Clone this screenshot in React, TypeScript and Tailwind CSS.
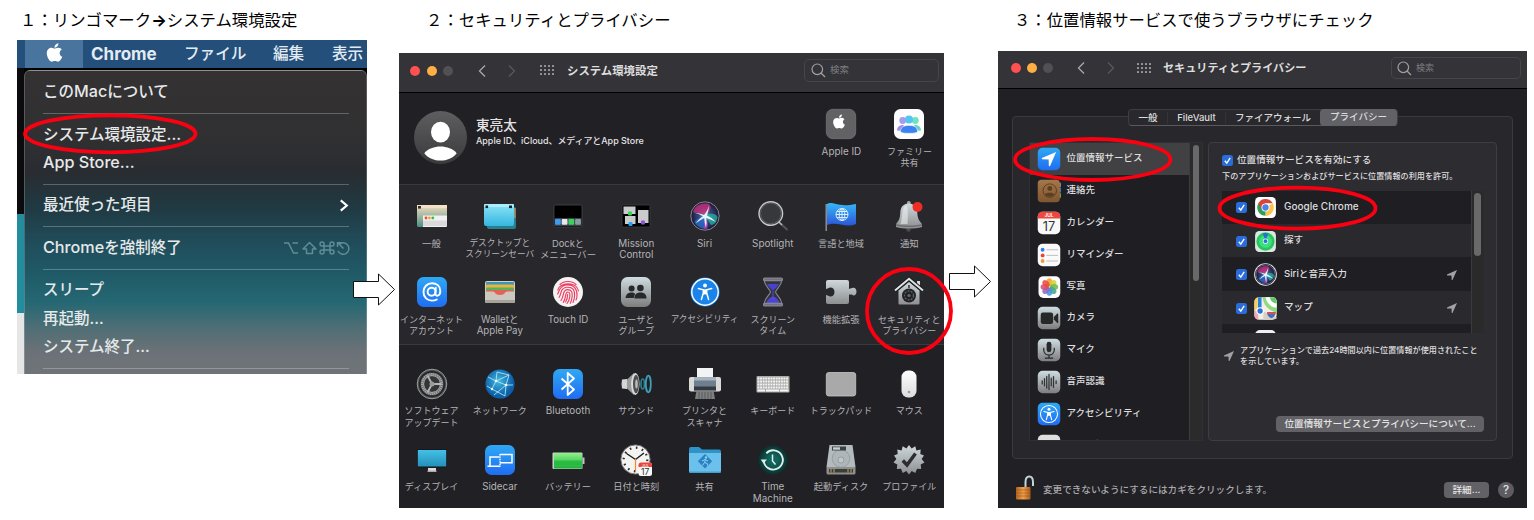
import React from "react";
import { FaApple } from "react-icons/fa";

const FONT = "font-['Inter','Noto_Sans_CJK_JP',sans-serif]";

function Defs() {
  const g = (id: string, a: string, b: string) => (
    <linearGradient id={id} x1="0" y1="0" x2="0" y2="1">
      <stop offset="0" stopColor={a} />
      <stop offset="1" stopColor={b} />
    </linearGradient>
  );
  return (
    <svg className="absolute h-0 w-0" aria-hidden="true">
      <defs>
        {g("blue", "#2fa8f5", "#1f6df2")}
        {g("grey", "#cfdde2", "#7d7d7d")}
        {g("silver", "#cfd8dc", "#8d8f90")}
        {g("white", "#ffffff", "#dcdcdc")}
        {g("desk", "#8be4f7", "#35b6e0")}
        {g("general", "#f6dfc0", "#4a8f85")}
        {g("flag", "#35b8f8", "#2c55d8")}
        {g("green", "#8df28d", "#1fae35")}
        {g("screen", "#45bfe6", "#2390bb")}
        {g("bronze", "#a5774a", "#7e5630")}
        {g("userdark", "#5e5e60", "#3a3a3c")}
        <radialGradient id="tm">
          <stop offset="0.3" stopColor="#12655c" />
          <stop offset="1" stopColor="#0b302e" />
        </radialGradient>
        <radialGradient id="net" cx="0.45" cy="0.4">
          <stop offset="0" stopColor="#43b8dd" />
          <stop offset="1" stopColor="#0c5fa8" />
        </radialGradient>
        <radialGradient id="siriBg">
          <stop offset="0" stopColor="#7fb6d8" />
          <stop offset="0.4" stopColor="#35507e" />
          <stop offset="1" stopColor="#1d1638" />
        </radialGradient>
        <linearGradient id="wood">
          <stop offset="0" stopColor="#b5641f" />
          <stop offset="0.5" stopColor="#f0a14c" />
          <stop offset="1" stopColor="#a85a1c" />
        </linearGradient>
      </defs>
    </svg>
  );
}

const Siri = () => (
  <g>
    <circle cx="16" cy="16" r="14.2" fill="url(#siriBg)" stroke="#8f9399" strokeWidth="0.9" />
    <path d="M4 12C6 5 13 2.500 20 4C24 8 20 13 16 15.500C12 13.500 7 12.500 4 12Z" fill="#d1307f" opacity="0.75" />
    <path d="M16 15.500C20 13 27 13 28.500 17C28 22 25 25 22 25Z" fill="#27b5a4" opacity="0.75" />
    <path d="M16 16C11 17 6 20 5.500 22C8 27 13 29 16 28.500Z" fill="#2b6fd0" opacity="0.75" />
    <path d="M16 16C18 19 20 24 18 29L14.500 29Z" fill="#b13cc0" opacity="0.75" />
    <path d="M4.500 12.500Q11 13 15 15Q18 12 20 5.500Q19.500 12 18 15.500Q23 17.500 27 22Q22 19.500 17.300 18Q18 23 17 28Q15.500 23 15.200 18Q11 20 6.500 23.500Q10 18.500 14 16.300Q10 13.800 4.500 12.500Z" fill="#eafcff" opacity="0.95" />
  </g>
);

const AccessMan = ({ r = 11.4 }: { r?: number }) => (
  <g>
    <circle cx="16" cy="16" r={r} fill="none" stroke="#fff" strokeWidth="1.4" />
    <circle cx="16" cy="9.600" r="2" fill="#fff" />
    <path d="M9.300 12.600L14.300 13.800V17L12.400 23.500M22.700 12.600L17.700 13.800V17L19.600 23.500" fill="none" stroke="#fff" strokeWidth="1.500" strokeLinecap="round" />
    <path d="M14 13.300H18V18.400H14Z" fill="#fff" />
  </g>
);

const PEOPLE = (
  <g fill="#26282a">
    <circle cx="11.600" cy="12.500" r="3" />
    <circle cx="20.400" cy="12" r="3.300" />
    <path d="M5.500 22C6 17.500 9 16.600 11.600 16.600C13 16.600 14.500 17 15 18L13.600 22Z" />
    <path d="M14.300 22.500C14.600 18 17 16.600 20.400 16.600C24 16.600 26.200 18 26.600 22.500Z" />
  </g>
);

const tile = (fill: string) => <rect x="1" y="1" width="30" height="30" rx="6.500" fill={fill} />;

const ICONS: Record<string, React.ReactNode> = {
  appleid: (
    <g>
      <rect x="1.300" y="1.300" width="29.400" height="29.400" rx="6.500" fill="#626264" stroke="#78787a" strokeWidth="0.700" />
      <FaApple x="6" y="5.500" width="20" height="20" color="#fff" />
    </g>
  ),
  family: (
    <g>
      {tile("#fdfdfe")}
      <circle cx="9.700" cy="12.500" r="3.400" fill="#a99af0" />
      <circle cx="22.300" cy="12.500" r="3.400" fill="#6fe3bd" />
      <path d="M4 22.500C4 18.500 7 17 10.500 17L12 23Z" fill="#a08df0" />
      <path d="M28 22.500C28 18.500 25 17 21.500 17L20 23Z" fill="#62d8bc" />
      <circle cx="16" cy="11.500" r="4" fill="#54c6ee" />
      <path d="M7.500 24C7.500 19 11 17.400 16 17.400S24.500 19 24.500 24C23 25.800 9 25.800 7.500 24Z" fill="#3d82f2" stroke="#fff" strokeWidth="0.500" />
    </g>
  ),
  general: (
    <g>
      <rect x="1" y="5" width="30" height="22" rx="1.500" fill="url(#general)" />
      <rect x="1" y="5" width="30" height="3" fill="#f3e2c8" />
      <rect x="2" y="6" width="3" height="2.600" fill="#333" />
      <path d="M7 15.500H31V25.500Q31 27 29.500 27H7Z" fill="#f1f1f1" />
      <path d="M7 20.500H31V26H7Z" fill="#dadada" />
      <circle cx="10" cy="18" r="1.400" fill="#f0483e" />
      <circle cx="13.400" cy="18" r="1.400" fill="#f5a623" />
      <circle cx="16.800" cy="18" r="1.400" fill="#35c13f" />
    </g>
  ),
  desktop: (
    <g>
      <rect x="3" y="7" width="29" height="22" rx="2" fill="#2a7f8e" />
      <path d="M30 8H31.600V18H30Z" fill="#a98b62" />
      <rect x="0" y="4" width="30" height="22" rx="2" fill="url(#desk)" />
      <rect x="0" y="4" width="30" height="3" rx="1" fill="#a9eefa" />
      <rect x="1.500" y="5.500" width="2.600" height="2.600" fill="#123" />
      <rect x="25" y="5.500" width="3" height="2.600" fill="#123" />
    </g>
  ),
  dock: (
    <g>
      <rect x="2" y="5" width="28" height="22" rx="1.500" fill="#000" stroke="#48484b" strokeWidth="0.800" />
      <rect x="2.500" y="18" width="27" height="8" fill="#3b4148" />
      <rect x="3" y="19" width="5.800" height="5.800" rx="1" fill="#3c9df0" />
      <rect x="9.700" y="19" width="5.800" height="5.800" rx="1" fill="#e8e8ea" />
      <rect x="16.400" y="19" width="5.800" height="5.800" rx="1" fill="#38d35a" />
      <rect x="23.100" y="19" width="5.800" height="5.800" rx="1" fill="#8b9ba3" />
    </g>
  ),
  mission: (
    <g>
      <rect x="2" y="5" width="28" height="22" rx="1.500" fill="#000" stroke="#3e3e41" strokeWidth="0.800" />
      <path d="M3.500 6.500H15.500V14H3.500ZM5 16H15.500V24H5ZM18 10H28.500V23H18Z" fill="#c9cbcc" />
      <rect x="8" y="11.500" width="4" height="4" rx="1" fill="#34d44c" />
      <rect x="8.500" y="22" width="4" height="4" rx="1" fill="#2aa2ef" />
      <rect x="21" y="20.500" width="4" height="4" rx="1" fill="#9152d6" />
    </g>
  ),
  siri: <Siri />,
  spotlight: (
    <g>
      <path d="M23.500 23.500L30 29.500" stroke="#55565a" strokeWidth="2" strokeLinecap="round" />
      <path d="M22 22L25 25" stroke="#b6b6b8" strokeWidth="1.500" />
      <circle cx="13.800" cy="13.500" r="11.800" fill="#37383b" stroke="#c7c8ca" strokeWidth="1.400" />
      <circle cx="13.800" cy="13.500" r="10.300" fill="none" stroke="#66676a" strokeWidth="0.800" />
    </g>
  ),
  language: (
    <g>
      <path d="M1.200 4V31" stroke="#9a9da2" strokeWidth="1.300" />
      <path d="M2 4C8 0.500 12 8 31 4V24C20 28.500 12 21 2 25Z" fill="url(#flag)" />
      <g fill="none" stroke="#d9efff" strokeWidth="1">
        <circle cx="17" cy="14.500" r="6" />
        <ellipse cx="17" cy="14.500" rx="2.800" ry="6" />
        <path d="M11 14.500H23M12 11.500H22M12 17.500H22M17 8.500V20.500" />
      </g>
    </g>
  ),
  bell: (
    <g>
      <circle cx="15.500" cy="29.500" r="2.300" fill="#4b4b4d" />
      <rect x="14" y="1" width="3.600" height="5" rx="1.500" fill="#a7a7a7" />
      <path d="M15.800 3.500C9 4 7.500 8 7.300 13C7 19 5.500 21 3 24V27C10 29 22 29 29 27V24C26.500 21 24.600 19 24.300 13C24 8 22 4 15.800 3.500Z" fill="url(#silver)" />
      <path d="M12 6C9 8 9.500 18 7.500 24H14.500C15 18 15 10 14 5.500Z" fill="#f3f3f3" opacity="0.550" />
      <path d="M3 24C10 26 22 26 29 24V25.500C22 27.500 10 27.500 3 25.500Z" fill="#6d6d6e" />
      <circle cx="24.500" cy="7" r="5" fill="#f02c27" />
    </g>
  ),
  internet: (
    <g>
      {tile("url(#blue)")}
      <g fill="none" stroke="#fff" strokeWidth="1.900" strokeLinecap="round">
        <circle cx="15.600" cy="15.800" r="4" />
        <path d="M19.800 11.800L19.300 17.500C19.200 21 24.300 20.500 24.300 15C24.300 10 20.500 7.300 16 7.300C11 7.300 7.500 11 7.500 16C7.500 21.500 11.500 24.600 16 24.600C18 24.600 19.600 24.200 20.800 23.500" />
      </g>
    </g>
  ),
  wallet: (
    <g>
      <rect x="1" y="5" width="30" height="22" rx="2" fill="#d3cfc4" />
      <rect x="2" y="6" width="28" height="6" rx="1" fill="#3c95b9" />
      <rect x="2" y="8.500" width="28" height="6" rx="1" fill="#e9b53f" />
      <rect x="2" y="11.500" width="28" height="6" rx="1" fill="#56b35b" />
      <rect x="2" y="14" width="28" height="6" rx="1" fill="#e46158" />
      <path d="M1 15.500H9C11 15.500 11 19 16 19S21 15.500 23 15.500H31V25Q31 27 29 27H3Q1 27 1 25Z" fill="#cbc8bf" />
      <path d="M1 24H31V25Q31 27 29 27H3Q1 27 1 25Z" fill="#a7a399" />
    </g>
  ),
  touchid: (
    <g>
      <circle cx="16" cy="16" r="15" fill="#f4f2f3" />
      <g fill="none" stroke="#ee3d60" strokeWidth="1.150" strokeLinecap="round">
        <path d="M8 8.500C12 4.500 20 4.500 24 8.500M5.800 14C7 6.500 25 5 26.500 15M5.500 18C7 17 6.500 10 14 9C22 8 25 13 25 19C25 21 24.500 23 24 24" />
        <path d="M7 21.500C10 18 7.500 12.500 14.500 11.300C21.500 10.600 22.800 15 22.600 19.500C22.500 22 22 24.500 21 26.500M9 24.500C12.500 20 10 14.500 15 13.600C20 13.300 20.400 17 20.200 20C20 23 19.300 25.500 18.300 27.300" />
        <path d="M11.300 26.300C14.600 21.500 12.500 17 15.500 16C18 15.800 18 18.500 17.800 20.500C17.500 23.500 16.600 25.600 15 27.500M15.600 18.500C15.700 21.500 15 24 13.500 26" />
      </g>
    </g>
  ),
  users: (
    <g>
      {tile("url(#grey)")}
      {PEOPLE}
    </g>
  ),
  access: (
    <g>
      <circle cx="16" cy="16" r="14.600" fill="#1a84ea" />
      <AccessMan r={13.2} />
    </g>
  ),
  screentime: (
    <g stroke="#85868f" strokeWidth="1.200" strokeLinejoin="round">
      <path d="M7 4C8 11 13 13 13.500 16C13 19 8 21 7 28H25C24 21 19 19 18.500 16C19 13 24 11 25 4Z" fill="#33323f" />
      <path d="M10 8C11 11 15 13 16 15C17 13 21 11 22 8Z" fill="#4842c7" stroke="none" />
      <path d="M16 15V24M10 27C11 23 14 21.500 16 21C18 21.500 21 23 22 27Z" fill="#4a43d8" stroke="#5a54e8" strokeWidth="0.800" />
      <rect x="6.500" y="2" width="19" height="2.600" rx="1.300" fill="#74757c" />
      <rect x="6.500" y="27.400" width="19" height="2.600" rx="1.300" fill="#74757c" />
    </g>
  ),
  extension: (
    <path d="M3 4H22Q24 4 24 6V13C26 12 27 12.500 28 11.800C29.500 11.300 31.500 12.500 31.500 15.500S29.500 20 28 19.300C27 18.500 25.500 18.600 24 18.500V26Q24 28 22 28H3Q1 28 1 26V19C2.500 19 3.500 20.500 5.500 20.500C8 20.500 9.500 18.500 9.500 16S8 11.500 5.500 11.500C3.500 11.500 2.500 13 1 13V6Q1 4 3 4Z" fill="url(#silver)" />
  ),
  security: (
    <g>
      <path d="M5.500 14.500L16 6L26.500 14.500V27.500Q26.500 28.500 25.500 28.500H6.500Q5.500 28.500 5.500 27.500Z" fill="url(#silver)" />
      <path d="M24 5H27V12L24 9.500Z" fill="#d4d8da" />
      <path d="M2 14.500L16 2.800L30 14.500" fill="none" stroke="#1b1c1e" strokeWidth="3.800" />
      <path d="M2 14.500L16 2.800L30 14.500" fill="none" stroke="#dfe3e5" strokeWidth="2" />
      <circle cx="16" cy="19.500" r="7" fill="#202225" />
      <circle cx="16" cy="19.500" r="4.500" fill="none" stroke="#5c6063" strokeWidth="1.300" strokeDasharray="2 1.200" />
      <circle cx="16" cy="19.500" r="1.600" fill="#686c6f" />
      <path d="M15.300 9H16.700V12H15.300Z" fill="#222" />
    </g>
  ),
  update: (
    <g fill="none">
      <circle cx="16" cy="16" r="14.800" fill="#4c4d4f" stroke="#9b9c9d" strokeWidth="1" />
      <circle cx="16" cy="16" r="12.300" stroke="#252527" strokeWidth="1.600" />
      <circle cx="16" cy="16" r="10" stroke="#a5a6a6" strokeWidth="2.200" strokeDasharray="1.500 0.500" />
      <circle cx="16" cy="16" r="8.400" fill="#343537" stroke="#b6b6b6" strokeWidth="1" />
      <path d="M16 16L11.500 7.500M16 16H25.500M16 16L11.500 24.500" stroke="#b5b6b6" strokeWidth="1.800" />
      <circle cx="16" cy="16" r="2.500" fill="#999a9b" />
    </g>
  ),
  network: (
    <g>
      <circle cx="16" cy="16" r="14.600" fill="url(#net)" />
      <g stroke="#bff0ff" strokeWidth="0.800" fill="none">
        <path d="M4 9L12 13L25 7M13 4L12 13L22 17L29 17M12 13L8 21L21 28M22 17L21 28M22 17L10 27M3 18L8 21M13 4L25 7M22 17L25 7" />
      </g>
      <g fill="#e9fcff">
        <circle cx="12" cy="13" r="1.300" />
        <circle cx="22" cy="17" r="1.300" />
        <circle cx="8" cy="21" r="1.200" />
      </g>
    </g>
  ),
  bluetooth: (
    <g>
      {tile("url(#blue)")}
      <path d="M9.500 10.500L22 21.500L15.700 27V5L22 10.500L9.500 21.500" fill="none" stroke="#fff" strokeWidth="1.800" strokeLinejoin="round" />
    </g>
  ),
  sound: (
    <g>
      <path d="M2 11.500Q1 16 2 20.500L7 21V11Z" fill="#d5d5d5" />
      <path d="M7 11.500L14 5V27L7 20.500Z" fill="#9a9b9c" />
      <ellipse cx="15.300" cy="16" rx="4.200" ry="11" fill="#d9dadb" />
      <ellipse cx="16" cy="16" rx="3" ry="9.300" fill="#4f5052" />
      <ellipse cx="16.500" cy="16" rx="1.300" ry="4.500" fill="#b9babb" />
      <ellipse cx="22.700" cy="16" rx="1.700" ry="5" fill="none" stroke="#2e8298" strokeWidth="1.600" />
      <ellipse cx="28.300" cy="16" rx="2.500" ry="8.300" fill="none" stroke="#3d9fb8" strokeWidth="1.800" />
    </g>
  ),
  printer: (
    <g>
      <rect x="8" y="0" width="16" height="12" fill="#f1f3f4" />
      <rect x="0" y="9" width="32" height="14.500" rx="2" fill="#d9d9d8" />
      <rect x="5" y="9.500" width="22" height="13" fill="#6e7f8d" />
      <rect x="5" y="9.500" width="22" height="3" fill="#a7b5c0" />
      <rect x="5" y="18.500" width="22" height="4" fill="#343a40" />
      <path d="M7.500 22.500H24.500L26 31H6Z" fill="#7d7f80" />
      <path d="M10 24V31M13 24V31M16 24V31M19 24V31M22 24V31" stroke="#555759" strokeWidth="0.900" />
    </g>
  ),
  keyboard: (
    <g>
      <rect x="-0.500" y="8" width="33" height="16.500" rx="1" fill="#a9a9a8" />
      <path d="M0.500 10.500H31.500M0.500 13.500H31.500M0.500 16.500H31.500M0.500 19.500H31.500" stroke="#f4f4f4" strokeWidth="2" strokeDasharray="1.900 0.700" />
      <path d="M0.500 22.500H8M9 22.500H22M23 22.500H31.500" stroke="#f4f4f4" strokeWidth="1.900" />
    </g>
  ),
  trackpad: <rect x="1.300" y="4.500" width="29.400" height="23.500" rx="2.500" fill="#a9a9a9" stroke="#c6c6c6" strokeWidth="0.800" />,
  mouse: (
    <g>
      <rect x="8.500" y="2.500" width="15" height="27" rx="6.500" fill="url(#white)" />
      <circle cx="16" cy="24" r="1.300" fill="#9b9b9b" />
    </g>
  ),
  display: (
    <g>
      <rect x="1" y="5" width="30" height="18.500" fill="#161718" />
      <rect x="1.800" y="6" width="28.400" height="16.500" fill="url(#screen)" />
      <path d="M12 24H20V27.500H12Z" fill="#dededd" />
      <path d="M11.500 26.500H20.500V28H11.500Z" fill="#aaa" />
    </g>
  ),
  sidecar: (
    <g>
      {tile("url(#blue)")}
      <g fill="none" stroke="#fff" strokeWidth="1.500">
        <path d="M15.500 13H6V21.500M3.500 22.300H16.500M16 10.500H28V18.800H16" />
        <path d="M16 10V21" strokeDasharray="1.400 1" />
      </g>
    </g>
  ),
  battery: (
    <g>
      <rect x="0.500" y="8.500" width="30" height="16.500" rx="1" fill="#c9d2ca" />
      <rect x="30.500" y="13.500" width="2" height="6.500" fill="#bfc3c0" />
      <rect x="2" y="9" width="28" height="15.500" fill="url(#green)" />
      <path d="M2 16.500H30V21H2Z" fill="#22b83c" opacity="0.800" />
    </g>
  ),
  datetime: (
    <g>
      <circle cx="15.500" cy="15.500" r="14.600" fill="#f3f3f2" stroke="#77797a" strokeWidth="1" />
      <circle cx="15.500" cy="15.500" r="11.800" fill="none" stroke="#2a2a2a" strokeWidth="2.200" strokeDasharray="1.600 4.580" />
      <path d="M15.500 15.500L6.500 9.500M15.500 15.500L24 9" stroke="#1a1a1a" strokeWidth="1.400" />
      <path d="M15.500 15V28" stroke="#f1892d" strokeWidth="1.200" />
      <rect x="18.500" y="18.500" width="13.500" height="13.500" rx="2.500" fill="#f8f8f8" />
      <path d="M18.500 23V21Q18.500 18.500 21 18.500H29.500Q32 18.500 32 21V23Z" fill="#e9453e" />
      <text x="25.200" y="31" fontSize="8.500" textAnchor="middle" fill="#333">17</text>
      <text x="25.200" y="22.500" fontSize="4" textAnchor="middle" fill="#fff">JUL</text>
    </g>
  ),
  share: (
    <g>
      <path d="M0 5Q0 3 2 3H10L13 5.500H30Q32 5.500 32 7.500V14H0Z" fill="#2f93c9" />
      <path d="M0 9H32V27Q32 29 30 29H2Q0 29 0 27Z" fill="#6cc0ec" />
      <path d="M0 27.500H32Q32 29 30 29H2Q0 29 0 27.500Z" fill="#3f9fd0" />
      <path d="M16 10L23.200 17.200L16 24.400L8.800 17.200Z" fill="#2a83c0" />
      <circle cx="17" cy="13.500" r="1.200" fill="#8ed2f5" />
      <path d="M16.500 15.500L15.500 18.500L13.500 21.500M15.500 18.500L18.300 19.500L18.500 21.500M13 17L16 15.500L19 17" stroke="#8ed2f5" strokeWidth="1" fill="none" />
    </g>
  ),
  timemachine: (
    <g>
      <circle cx="16" cy="16" r="14.500" fill="url(#tm)" />
      <path d="M6.700 17A9.600 9.600 0 1 0 9.300 9.300" fill="none" stroke="#dcefed" strokeWidth="1.900" />
      <path d="M3.700 15.500H10L6.500 19.500Z" fill="#dcefed" />
      <path d="M15.500 10.500V17L18.500 20.500" fill="none" stroke="#dcefed" strokeWidth="1.500" />
    </g>
  ),
  disk: (
    <g>
      <path d="M4.500 1H27.500L30.500 23H1.500Z" fill="#b4bbbf" />
      <path d="M1.500 23H30.500V29Q30.500 30.500 29 30.500H3Q1.500 30.500 1.500 29Z" fill="#8c8e8f" />
      <path d="M4 25H28V28.500H4Z" fill="#3c3d35" />
      <path d="M6 25V28.500M9 25V28.500M23 25V28.500M26 25V28.500" stroke="#c0a85c" strokeWidth="1" />
      <circle cx="16" cy="14.500" r="8.800" fill="#aeb6ba" stroke="#90989c" strokeWidth="0.800" />
      <circle cx="16" cy="16" r="3" fill="#c0c6c9" stroke="#8f979b" strokeWidth="0.800" />
      <rect x="7" y="2.500" width="14" height="4" fill="#3c4043" />
      <rect x="8" y="3.300" width="7" height="2.400" fill="#c8ccce" />
    </g>
  ),
  profile: (
    <g>
      <path
        d="M16 1L18.600 4.600L22.300 2.200L23.400 6.400L27.700 5.500L27.300 9.900L31 11.500L28.600 15L31.500 18.500L27.700 20.500L28.200 24.900L24 24.800L22.300 29L18.700 26.900L16 30.500L13.300 26.900L9.700 29L8 24.800L3.800 24.900L4.300 20.500L0.500 18.500L3.400 15L1 11.500L4.700 9.900L4.300 5.500L8.600 6.400L9.700 2.200L13.400 4.600Z"
        fill="url(#silver)"
      />
      <path d="M9.800 16.500L14 21L22.500 9.500" fill="none" stroke="#2b2d2f" strokeWidth="3.400" />
    </g>
  ),
  location: (
    <g>
      {tile("url(#blue)")}
      <path d="M25.500 6.500L6.500 14.700Q5.800 15.800 7 16.200L15.500 16.500L15.800 25Q16.200 26.200 17.300 25.500Z" fill="#fff" />
    </g>
  ),
  contacts: (
    <g>
      <rect x="28" y="5" width="4" height="6" fill="#7d8288" />
      <rect x="28" y="12" width="4" height="6" fill="#3b7bb0" />
      <rect x="28" y="19" width="4" height="6" fill="#6d9b4e" />
      <rect x="1" y="1" width="29.500" height="30" rx="5" fill="url(#bronze)" />
      <circle cx="17" cy="15.500" r="9" fill="none" stroke="#5d3f20" strokeWidth="1.300" />
      <circle cx="17" cy="12.600" r="3.300" fill="#5d3f20" />
      <path d="M10.500 20.500C12 17.500 22 17.500 23.500 20.500C20 24.500 14 24.500 10.500 20.500Z" fill="#5d3f20" />
    </g>
  ),
  calendar: (
    <g>
      {tile("#f8f8f8")}
      <path d="M1 10V7.500Q1 1 7.500 1H24.500Q31 1 31 7.500V10Z" fill="#ec4840" />
      <text x="16" y="8" fontSize="6.500" fontWeight="600" textAnchor="middle" fill="#fff">JUL</text>
      <text x="16" y="26.500" fontSize="17" fontWeight="400" textAnchor="middle" fill="#333">17</text>
    </g>
  ),
  reminders: (
    <g>
      {tile("#fafafa")}
      <circle cx="7.500" cy="9" r="2.600" fill="#2f7df0" />
      <circle cx="7.500" cy="16.500" r="2.600" fill="#ee4336" />
      <circle cx="7.500" cy="24" r="2.600" fill="#f29a35" />
      <path d="M12.500 9H28M12.500 16.500H28M12.500 24H28" stroke="#bdbdc0" strokeWidth="1.300" />
    </g>
  ),
  photos: (
    <g>
      <rect x="2" y="1.500" width="29" height="29" rx="6.500" fill="#fdfdfd" />
      {["#f5a12c", "#d6d038", "#75b944", "#47a98c", "#4596db", "#8a6cc8", "#d24d7b", "#ef4a38"].map((c, i) => (
        <ellipse key={c} cx="16.500" cy="9.700" rx="3.900" ry="5.500" fill={c} opacity="0.880" transform={`rotate(${i * 45} 16.500 16)`} />
      ))}
    </g>
  ),
  camera: (
    <g>
      {tile("url(#grey)")}
      <rect x="5" y="8.500" width="16.500" height="15.500" rx="3" fill="#26282a" />
      <path d="M22.500 14.500L27 10Q28.300 9.500 28.300 11V21.500Q28.300 23 27 22.500L22.500 18Z" fill="#26282a" />
    </g>
  ),
  mic: (
    <g>
      {tile("url(#grey)")}
      <rect x="12.800" y="5" width="6.400" height="14" rx="3.200" fill="#26282a" />
      <path d="M9 13V16C9 25 23 25 23 16V13M16 22.500V26.500M10.500 26.700H21.500" fill="none" stroke="#26282a" strokeWidth="1.600" />
    </g>
  ),
  speech: (
    <g>
      {tile("url(#grey)")}
      <path d="M7 14.500V18.500M10 11.500V21M13 8.500V24M16 6V26M19 11V21M22 9V23M25.500 14.500V18" stroke="#303335" strokeWidth="1.700" strokeLinecap="round" />
    </g>
  ),
  accessTile: (
    <g>
      {tile("url(#blue)")}
      <AccessMan />
    </g>
  ),
  blank: tile("#dedede"),
  chrome: (
    <g>
      <rect x="1.500" y="1.500" width="29" height="29" rx="6" fill="#fff" />
      <path d="M16 16L25.960 10.250A11.500 11.500 0 0 1 16 27.500Z" fill="#fbc54c" />
      <path d="M16 16L16 27.500A11.500 11.500 0 0 1 6.040 10.250Z" fill="#2e9e5b" />
      <path d="M16 10H26A11.500 11.500 0 0 0 6 10.200L11 19Z" fill="#d9453b" />
      <path d="M20.500 19L15.500 27.500A11.500 11.500 0 0 0 18 27.300Z" fill="#fbc54c" />
      <circle cx="16" cy="16" r="5.600" fill="#fff" />
      <circle cx="16" cy="16" r="4.400" fill="#4a84ec" />
    </g>
  ),
  find: (
    <g>
      <rect x="1.500" y="1.500" width="29" height="29" rx="6" fill="#dce8df" />
      <circle cx="16" cy="16" r="12.700" fill="#29c565" />
      <circle cx="16" cy="16" r="8.800" fill="#3fe07b" />
      <path d="M16 15L12 5Q16 3.500 20 5Z" fill="#2272d6" />
      <circle cx="16" cy="15.500" r="3.600" fill="#dff" />
      <circle cx="16" cy="15.500" r="2.600" fill="#2372e0" />
    </g>
  ),
  siriRing: (
    <g>
      <circle cx="16" cy="16" r="15.800" fill="#e9e9ec" />
      <circle cx="16" cy="16" r="14.500" fill="#17122b" />
      <g transform="translate(1 1) scale(0.940)">
        <Siri />
      </g>
    </g>
  ),
  maps: (
    <g>
      <rect x="0.500" y="0.500" width="31" height="31" rx="6.500" fill="#f3efe6" />
      <path d="M12 0.500H25Q31.500 0.500 31.500 7V22C24 20 13 14 12 0.500Z" fill="#8ed982" />
      <path d="M16 0.500C18 10 24 14 31.500 15V7Q31.500 0.500 25 0.500Z" fill="#fff" />
      <path d="M22 0.500C23 6 27 8 31.500 9V7Q31.500 0.500 25 0.500Z" fill="#67c66a" />
      <path d="M0.500 7Q0.500 1.500 5 0.700V15L0.500 20Z" fill="#f4cf57" />
      <path d="M0.500 21L6 17V31.500Q0.500 31 0.500 25Z" fill="#f0a7b7" />
      <path d="M13 20L31.500 28V30Q29 31.500 25 31.500H13Z" fill="#d5d0c6" />
      <path d="M5.500 0.500H10.500V16H5.500Z" fill="#2b7de0" />
      <circle cx="8.500" cy="19.500" r="5.300" fill="#fff" />
      <circle cx="8.500" cy="19.500" r="3.700" fill="#2773df" />
      <path d="M18.500 21H30C30 26 28 28 24.300 29.500C20 28 18.500 26 18.500 21Z" fill="#3c6fc2" />
      <path d="M18.500 21H30V24H18.500Z" fill="#d9504d" />
    </g>
  ),
};

function Icon({ name, className = "size-8" }: { name: string; className?: string }) {
  return (
    <svg viewBox="0 0 32 32" className={`block shrink-0 overflow-visible ${className}`}>
      {ICONS[name]}
    </svg>
  );
}

type App = [icon: string, lines: string[], size?: string];

function AppCell({ app }: { app: App }) {
  const [icon, lines, size = "text-[9px]"] = app;
  return (
    <div className="flex flex-col items-center">
      <Icon name={icon} />
      <div className={`mt-[5.5px] text-center leading-[11.5px] whitespace-nowrap text-[#b4b4b6] ${size}`}>
        {lines.map((l) => (
          <div key={l}>{l}</div>
        ))}
      </div>
    </div>
  );
}

const LAT = "text-[9.9px]";

const ROWS: App[][] = [
  [
    ["general", ["一般"], "text-[9.5px]"],
    ["desktop", ["デスクトップと", "スクリーンセーバ"], "text-[8.7px]"],
    ["dock", ["Dockと", "メニューバー"], "text-[9.4px]"],
    ["mission", ["Mission", "Control"], LAT],
    ["siri", ["Siri"], LAT],
    ["spotlight", ["Spotlight"], LAT],
    ["language", ["言語と地域"], "text-[9.2px]"],
    ["bell", ["通知"], "text-[9.4px]"],
  ],
  [
    ["internet", ["インターネット", "アカウント"]],
    ["wallet", ["Walletと", "Apple Pay"], "text-[9.7px]"],
    ["touchid", ["Touch ID"], "text-[9.7px]"],
    ["users", ["ユーザと", "グループ"]],
    ["access", ["アクセシビリティ"], "text-[8.6px]"],
    ["screentime", ["スクリーン", "タイム"]],
    ["extension", ["機能拡張"], "text-[9.3px]"],
    ["security", ["セキュリティと", "プライバシー"]],
  ],
  [
    ["update", ["ソフトウェア", "アップデート"]],
    ["network", ["ネットワーク"]],
    ["bluetooth", ["Bluetooth"], "text-[9.9px]"],
    ["sound", ["サウンド"]],
    ["printer", ["プリンタと", "スキャナ"]],
    ["keyboard", ["キーボード"]],
    ["trackpad", ["トラックパッド"]],
    ["mouse", ["マウス"]],
  ],
  [
    ["display", ["ディスプレイ"]],
    ["sidecar", ["Sidecar"], "text-[9.8px]"],
    ["battery", ["バッテリー"], "text-[9.2px]"],
    ["datetime", ["日付と時刻"], "text-[9.2px]"],
    ["share", ["共有"], "text-[9.2px]"],
    ["timemachine", ["Time", "Machine"], LAT],
    ["disk", ["起動ディスク"], "text-[9.2px]"],
    ["profile", ["プロファイル"]],
  ],
];

function AppRow({ row, className }: { row: App[]; className: string }) {
  return (
    <div className={`-ml-[1.600px] grid w-[546px] grid-cols-8 ${className}`}>
      {row.map((a) => (
        <AppCell key={a[0]} app={a} />
      ))}
    </div>
  );
}

function WindowBar({ title, compact }: { title: string; compact?: boolean }) {
  return (
    <div
      className={`flex shrink-0 items-center border-b border-black bg-[#343338] ${
        compact ? "h-[38px] pr-[6px] pb-[3px] pl-[13px]" : "h-10 pr-[5px] pb-1 pl-[11px]"
      }`}
    >
      <div className={`flex ${compact ? "gap-[6px]" : "gap-[6.5px]"}`}>
        <span className="size-[10px] rounded-full bg-[#fe5150]" />
        <span className="size-[10px] rounded-full bg-[#fdaf45]" />
        <span className="size-[10px] rounded-full bg-[#515055]" />
      </div>
      <svg viewBox="0 0 40 14" className={`h-[14px] w-10 ${compact ? "ml-[24px]" : "ml-[25px]"}`} fill="none" strokeWidth="1.3">
        <path d="M7 1.500L1.500 7L7 12.500" stroke="#a8a8aa" />
        <path d="M31 1.500L36.500 7L31 12.500" stroke="#59595d" />
      </svg>
      <svg viewBox="0 0 15 11" className={`h-[11px] w-[15px] ${compact ? "ml-[20px]" : "ml-[22px]"}`} fill="#9b9b9e">
        {[0, 4, 8].map((y) => [0, 4, 8, 12].map((x) => <rect key={`${x}-${y}`} x={x} y={y} width="2" height="2" rx="0.500" />))}
      </svg>
      <div
        className={`leading-4 font-bold whitespace-nowrap text-[#dededf] ${
          compact ? "ml-[11px] text-[11.1px]" : "ml-[12px] text-[11.4px]"
        }`}
      >
        {title}
      </div>
      <div
        className={`ml-auto flex items-center rounded-[5px] border border-[#46454a] text-[#7d7d80] ${
          compact ? "h-[22px] w-[130px] pl-[5px] text-[9px]" : "h-[23px] w-[135px] pl-[6px] text-[9.5px]"
        }`}
      >
        <svg viewBox="0 0 15 15" className="mr-[4px] size-[15px]" fill="none" stroke="#a0a0a3" strokeWidth="1.200">
          <circle cx="6.300" cy="6.300" r="5.300" />
          <path d="M10 10L14 14" />
        </svg>
        検索
      </div>
    </div>
  );
}

function Check() {
  return (
    <span className="flex size-[11px] shrink-0 items-center justify-center rounded-[2.5px] bg-[#2a6dd8]">
      <svg viewBox="0 0 10 10" className="size-[9px]" fill="none" stroke="#fff" strokeWidth="1.500">
        <path d="M2 5.300L4.200 7.800L8 2" />
      </svg>
    </span>
  );
}

function LocArrow() {
  return (
    <svg viewBox="0 0 10 10" className="size-[10px] shrink-0" fill="#a3a3a5">
      <path d="M10 0L0 4.600V5.400L4.500 5.600L4.700 10H5.500Z" />
    </svg>
  );
}

function Sep() {
  return (
    <div className="flex h-[14px] shrink-0 items-center">
      <div className="h-px w-full bg-white/25" />
    </div>
  );
}

function MenuItem({ children, right }: { children: React.ReactNode; right?: React.ReactNode }) {
  return (
    <div className="flex h-[28.5px] shrink-0 items-center justify-between leading-[28px] whitespace-nowrap">
      <span>{children}</span>
      {right}
    </div>
  );
}

function MenuPanel() {
  return (
    <section className="flex w-[350px] flex-col">
      <h2 className="h-10 pl-[3px] text-[16.4px] leading-10 font-normal whitespace-nowrap text-black">
        １：リンゴマーク<span className="font-bold">→</span>システム環境設定
      </h2>
      <div className="flex h-[334px] flex-col overflow-hidden bg-black">
        <div className="flex h-[28px] shrink-0 items-center bg-[#244f7b] pl-2 text-[15.6px] leading-[28px] font-medium text-[#e3ebf2]">
          <div className="flex h-full w-[58px] items-center justify-center bg-[#49749e] pb-[3px] text-white">
            <FaApple className="size-[21px]" />
          </div>
          <span className="ml-[8px] w-[93px] text-[17px] font-bold">Chrome</span>
          <span className="w-[89px]">ファイル</span>
          <span className="w-[59px]">編集</span>
          <span className="whitespace-nowrap">表示</span>
        </div>
        <div className="flex flex-1">
          <div className="flex w-[7px] shrink-0 flex-col">
            <div className="h-[146px] bg-[#0b0b0d]" />
            <div className="h-[99px] bg-[#238c9d]" />
            <div className="flex-1 bg-[#e6e6e7]" />
          </div>
          <div className="mt-[2px] flex flex-1 flex-col overflow-hidden rounded-t-[6px] border border-b-0 border-white/20 bg-[linear-gradient(180deg,#343131_0%,#303032_22%,#292c31_33%,#203a43_45%,#204c5a_56%,#205c69_68%,#256873_76%,#4e6e75_84%,#6b7277_92%,#707478_100%)] pt-[6.5px] pr-[17px] pl-[18px] text-[15.5px] font-medium text-[#e6e9ea]">
            <MenuItem>
              この<span className="text-[16.200px]">Mac</span>について
            </MenuItem>
            <Sep />
            <MenuItem>
              システム環境設定<span className="text-[16.200px]">...</span>
            </MenuItem>
            <MenuItem>
              <span className="text-[16.200px]">App Store...</span>
            </MenuItem>
            <Sep />
            <MenuItem
              right={
                <svg viewBox="0 0 10 14" className="h-[13px] w-[10px]" fill="none" stroke="#fff" strokeWidth="2.300">
                  <path d="M1.500 1.500L8 7L1.500 12.500" />
                </svg>
              }
            >
              最近使った項目
            </MenuItem>
            <Sep />
            <MenuItem
              right={
                <svg viewBox="0 0 67 14" className="-mr-px h-[14px] w-[67px]" fill="none" stroke="#5f8c98" strokeWidth="1.500">
                  <path d="M1 2H5.500L10.500 12H15M9.500 2H15" />
                  <path d="M26.500 1.500L33 8H29.500V12.500H23.500V8H20Z" strokeLinejoin="round" />
                  <path d="M41 5H47V9H41ZM41 5H39A2 2 0 1 1 41 3ZM47 5V3A2 2 0 1 1 49 5ZM47 9H49A2 2 0 1 1 47 11ZM41 9V11A2 2 0 1 1 39 9Z" />
                  <path d="M57 2.800A5.700 5.700 0 1 1 55 10M60.500 7.500L55 2M54.500 6V1.700H59" />
                </svg>
              }
            >
              <span className="text-[16.200px]">Chrome</span>を強制終了
            </MenuItem>
            <Sep />
            <MenuItem>スリープ</MenuItem>
            <MenuItem>再起動...</MenuItem>
            <MenuItem>システム終了...</MenuItem>
            <Sep />
          </div>
        </div>
      </div>
    </section>
  );
}

function PreferencesPanel() {
  return (
    <section className="ml-[32px] flex w-[545px] flex-col">
      <h2 className="h-[53px] pl-[27px] text-[16.4px] leading-10 font-normal whitespace-nowrap text-black">２：セキュリティとプライバシー</h2>
      <div className="flex h-[455px] flex-col overflow-hidden bg-[#212025]">
        <WindowBar title="システム環境設定" />
        <div className="flex h-[92px] shrink-0 border-b border-[#3a393e]">
          <svg viewBox="0 0 54 54" className="mt-[18px] ml-[15px] size-[53px]">
            <circle cx="27" cy="27" r="27" fill="url(#userdark)" />
            <ellipse cx="27" cy="21.500" rx="9.700" ry="10.500" fill="#fff" />
            <path d="M10.500 43C18 34 36 34 43.500 43C36 53 18 53 10.500 43Z" fill="#fff" />
          </svg>
          <div className="mt-[23px] ml-[9px] whitespace-nowrap text-[#e4e4e5]">
            <div className="text-[13.6px] leading-[18px] font-medium">東亮太</div>
            <div className="text-[8.950px] leading-[14px] font-medium">Apple ID、iCloud、メディアとApp Store</div>
          </div>
          <div className="mr-[0.600px] ml-auto grid grid-cols-[68px_68px] pt-[15px]">
            <AppCell app={["appleid", ["Apple ID"], LAT]} />
            <AppCell app={["family", ["ファミリー", "共有"]]} />
          </div>
        </div>
        <div className="h-[160px] shrink-0 border-b border-[#3a393e] bg-[#28272c] pt-[15px]">
          <AppRow row={ROWS[0]} className="h-[76px]" />
          <AppRow row={ROWS[1]} className="" />
        </div>
        <div className="flex-1 pt-[22.5px]">
          <AppRow row={ROWS[2]} className="h-[76px]" />
          <AppRow row={ROWS[3]} className="" />
        </div>
      </div>
    </section>
  );
}

const SIDEBAR: [string, string][] = [
  ["location", "位置情報サービス"],
  ["contacts", "連絡先"],
  ["calendar", "カレンダー"],
  ["reminders", "リマインダー"],
  ["photos", "写真"],
  ["camera", "カメラ"],
  ["mic", "マイク"],
  ["speech", "音声認識"],
  ["accessTile", "アクセシビリティ"],
  ["blank", "入力監視"],
];

const SERVICES: [string, string, boolean][] = [
  ["chrome", "Google Chrome", false],
  ["find", "探す", false],
  ["siriRing", "Siriと音声入力", true],
  ["maps", "マップ", true],
];

function PrivacyPanel() {
  return (
    <section className="ml-[54px] flex w-[529px] flex-col">
      <h2 className="h-[51px] pl-[16px] text-[16.36px] leading-10 font-normal whitespace-nowrap text-black">
        ３：位置情報サービスで使うブラウザにチェック
      </h2>
      <div className="flex h-[457px] flex-col overflow-hidden bg-[#212025]">
        <WindowBar title="セキュリティとプライバシー" compact />
        <div className="mx-[14px] mt-[27px] flex h-[343px] shrink-0 flex-col rounded-[4px] border border-[#3a393e] bg-[#28272c]">
          <div className="-mt-[8px] ml-[115px] flex h-[17px] w-[270px] shrink-0 items-center rounded-[4px] border border-[#3e3d42] border-b-[#5a595e] bg-[#29282d] text-[9.5px] leading-4 font-medium whitespace-nowrap text-[#dcdcdd]">
            <span className="w-[38px] text-center leading-[14px]">一般</span>
            <span className="h-[12px] w-px bg-[#343338]" />
            <span className="w-[57px] text-center leading-[14px]">FileVault</span>
            <span className="h-[12px] w-px bg-[#343338]" />
            <span className="w-[94px] text-center leading-[14px]">ファイアウォール</span>
            <span className="h-[17px] flex-1 rounded-[4px] bg-[#626166] text-center leading-[16px]">プライバシー</span>
          </div>
          <div className="mt-[16px] flex gap-[6px] pl-[16px]">
            <div className="flex h-[299px] w-[174px] overflow-hidden border border-[#302f33] bg-[#1f1e23]">
              <div className="flex-1">
                {SIDEBAR.map(([icon, label], i) => (
                  <div
                    key={label}
                    className={`flex h-[31.900px] items-center pl-[6.500px] text-[9.5px] font-medium whitespace-nowrap text-[#dededf] ${
                      i === 0 ? "bg-[#414042]" : ""
                    }`}
                  >
                    <Icon name={icon} className="size-[24px]" />
                    <span className="-mt-[2px] ml-[6px] leading-4">{label}</span>
                  </div>
                ))}
              </div>
              <div className="w-[13px] border-l border-[#3b3a3c] bg-[#2b2b2b] pt-[2px] pl-[3px]">
                <div className="h-[136px] w-[6px] rounded-full bg-[#69696b]" />
              </div>
            </div>
            <div className="-ml-px flex h-[299px] w-[289px] flex-col rounded-[4px] border border-[#3e3d42] bg-[#2d2c31] pl-[13px] text-[#dededf]">
              <div className="mt-[11px] flex h-[12px] items-center text-[9.6px] font-medium whitespace-nowrap">
                <Check />
                <span className="ml-[4px]">位置情報サービスを有効にする</span>
              </div>
              <div className="mt-[4px] text-[8.150px] leading-[12px] font-medium whitespace-nowrap">
                下のアプリケーションおよびサービスに位置情報の利用を許可。
              </div>
              <div className="mt-[8.500px] flex h-[142px] w-[262px] shrink-0 overflow-hidden">
                <div className="flex-1">
                  {SERVICES.map(([icon, label, used], i) => (
                    <div
                      key={label}
                      className={`flex h-[33.400px] items-center pt-[1.500px] pr-[14px] pl-[14px] text-[9.6px] font-medium whitespace-nowrap ${
                        i % 2 ? "bg-[#2a292e]" : "bg-[#1f1e23]"
                      }`}
                    >
                      <Check />
                      <Icon name={icon} className="ml-[7px] size-[23px]" />
                      <span className="-mt-[2px] ml-[7px] flex-1 leading-4">
                        {i === 0 ? <span className="text-[10px]">{label}</span> : label}
                      </span>
                      {used && <LocArrow />}
                    </div>
                  ))}
                  <div className="h-[33px] bg-[#1f1e23] pt-[6px] pl-[33px]">
                    <div className="h-[22px] w-[21px] rounded-[5px] bg-[#f0f0f0]" />
                  </div>
                </div>
                <div className="w-[13px] border-l border-[#3b3a3c] bg-[#2a2a2b] pt-[2px] pl-[2px]">
                  <div className="h-[63px] w-[7px] rounded-full bg-[#69696b]" />
                </div>
              </div>
              <div className="mt-[12.500px] flex pl-[2px]">
                <div className="mt-[6px]">
                  <LocArrow />
                </div>
                <div className="ml-[6px] text-[8.150px] leading-[11px] font-medium whitespace-nowrap">
                  アプリケーションで過去24時間以内に位置情報が使用されたこと
                  <br />
                  を示しています。
                </div>
              </div>
              <div className="mt-auto mb-[8px] ml-[54px] h-[16px] w-[208px] rounded-[4px] bg-[#626166] text-center text-[9.650px] leading-[15px] font-medium whitespace-nowrap text-[#e5e5e5]">
                位置情報サービスとプライバシーについて...
              </div>
            </div>
          </div>
        </div>
        <div className="mt-[15px] flex h-[32px] items-center pr-[13px] pl-[17px]">
          <svg viewBox="0 0 20 26" className="-mt-[5px] h-[26px] w-[20px]">
            <path d="M10.500 12V7C10.500 -0.500 18 -0.500 18 7V11" fill="none" stroke="#c5d2d7" strokeWidth="2" />
            <rect x="1" y="12" width="14.500" height="12.500" rx="1" fill="url(#wood)" />
            <path d="M1 15H15.500M1 18H15.500M1 21H15.500" stroke="#8c4a14" strokeWidth="0.500" />
          </svg>
          <span className="ml-[8px] text-[9.600px] leading-4 font-medium whitespace-nowrap text-[#a9a9ab]">
            変更できないようにするにはカギをクリックします。
          </span>
          <span className="ml-auto h-[16px] w-[45px] rounded-[4px] bg-[#626166] text-center text-[9.600px] leading-[15px] font-medium text-[#e5e5e5]">
            詳細...
          </span>
          <span className="ml-[9px] size-4 rounded-full bg-[#5d5c61] text-center text-[11.500px] leading-4 font-medium text-[#e5e5e5]">?</span>
        </div>
      </div>
    </section>
  );
}

function Annotations() {
  return (
    <svg viewBox="0 0 1534 520" className="pointer-events-none absolute inset-0 h-[520px] w-[1534px]">
      <g fill="none" stroke="#fb0011" strokeWidth="3.800">
        <ellipse cx="110.300" cy="133.800" rx="85.300" ry="18.500" />
        <ellipse cx="909" cy="311" rx="42" ry="42" />
        <ellipse cx="1092.700" cy="159.500" rx="77.700" ry="20.500" />
        <ellipse cx="1297.500" cy="208.200" rx="78" ry="20.500" />
      </g>
      <g fill="#fff" stroke="#111" strokeWidth="1">
        <path d="M353.500 281.500H378.500V274L394.500 289.500L378.500 305V297.500H353.500Z" />
        <path d="M949.500 273.500H974.500V266L990.500 281.500L974.500 297V289.500H949.500Z" />
      </g>
    </svg>
  );
}

export default function App() {
  return (
    <main className={`relative flex h-[520px] w-[1534px] overflow-hidden bg-white pl-[17px] ${FONT}`}>
      <Defs />
      <MenuPanel />
      <PreferencesPanel />
      <PrivacyPanel />
      <Annotations />
    </main>
  );
}
